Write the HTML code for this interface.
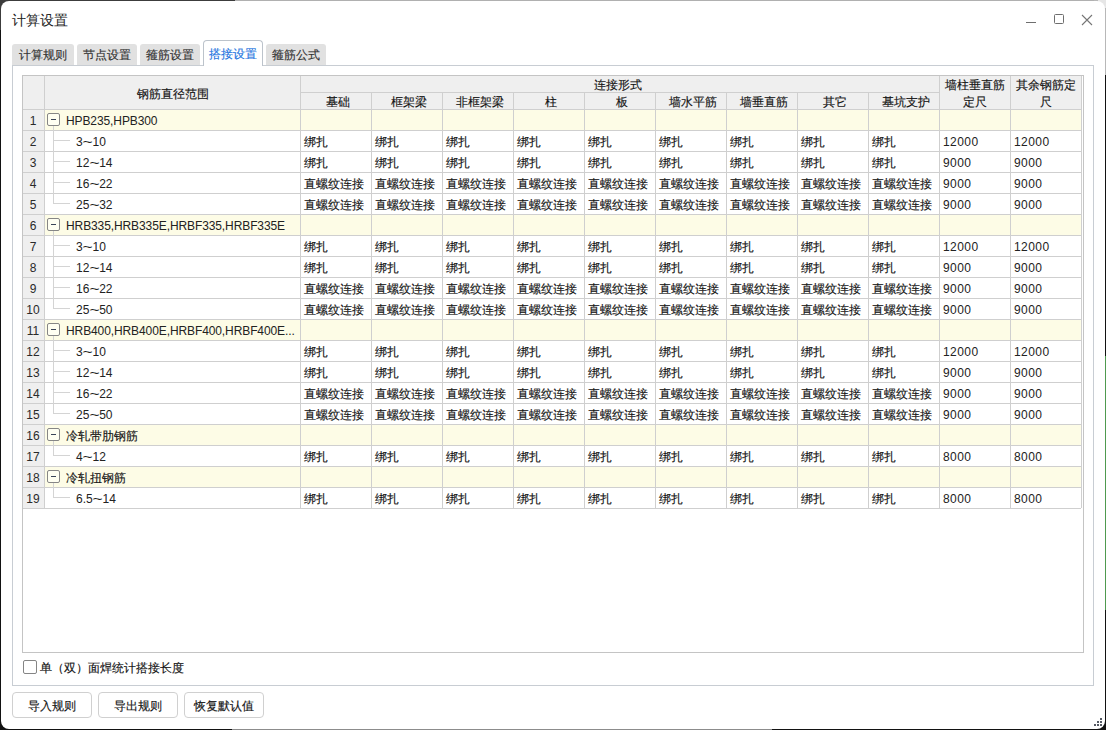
<!DOCTYPE html><html><head><meta charset="utf-8"><style>
*{box-sizing:border-box}
html,body{margin:0;padding:0}
body{width:1106px;height:730px;position:relative;overflow:hidden;background:#121212;font-family:"Liberation Sans",sans-serif;font-size:12px;color:#141414}
.a{position:absolute}
.win{left:1px;top:1px;width:1104px;height:728px;background:#fff;border-radius:8px;overflow:hidden}
.t{position:absolute;white-space:nowrap;line-height:14px;-webkit-text-stroke:0.15px currentColor}
.tab{position:absolute;top:44px;height:21px;background:#e1e1e1;border-radius:3px 3px 0 0}
.hl{position:absolute;height:1px;background:#cfcfcf}
.vl{position:absolute;width:1px;background:#cfcfcf}
</style></head><body><div class="a" style="left:0;top:0;width:1106px;height:1px;background:#b0b0b0"></div>
<div class="a" style="left:0;top:0;width:235px;height:1px;background:#3c3c3c"></div>
<div class="a" style="left:0;top:0;width:12px;height:30px;background:#3c3c3c"></div>
<div class="a" style="left:1094px;top:0;width:12px;height:75px;background:#b8b8b8"></div>
<div class="a" style="left:1098px;top:0;width:8px;height:8px;background:#e6e6e6"></div>
<div class="a" style="left:232px;top:729px;width:540px;height:1px;background:#8c8c8c"></div>
<div class="a" style="left:1105px;top:356px;width:1px;height:254px;background:#4f9a4f"></div>
<div class="a win">
<div class="t" style="left:11px;top:12px;font-size:14px;line-height:15px;-webkit-text-stroke:0;color:#222">计算设置</div>
<div class="a" style="left:1025px;top:21px;width:10px;height:1px;background:#6e6e6e"></div>
<div class="a" style="left:1053px;top:13px;width:10px;height:10px;border:1px solid #6e6e6e;border-radius:1.5px"></div>
<svg class="a" style="left:1080px;top:13px" width="12" height="12" viewBox="0 0 12 12"><path d="M1 1L11 11M11 1L1 11" stroke="#767676" stroke-width="1.1"/></svg>
<div class="a" style="left:11px;top:43px;width:62px;height:21px;background:#e1e1e1;border-radius:3px 3px 0 0"></div>
<div class="t" style="left:11px;top:47px;width:62px;text-align:center;color:#333">计算规则</div>
<div class="a" style="left:76px;top:43px;width:60px;height:21px;background:#e1e1e1;border-radius:3px 3px 0 0"></div>
<div class="t" style="left:76px;top:47px;width:60px;text-align:center;color:#333">节点设置</div>
<div class="a" style="left:139px;top:43px;width:60px;height:21px;background:#e1e1e1;border-radius:3px 3px 0 0"></div>
<div class="t" style="left:139px;top:47px;width:60px;text-align:center;color:#333">箍筋设置</div>
<div class="a" style="left:265px;top:43px;width:60px;height:21px;background:#e1e1e1;border-radius:3px 3px 0 0"></div>
<div class="t" style="left:265px;top:47px;width:60px;text-align:center;color:#333">箍筋公式</div>
<div class="a" style="left:11px;top:64px;width:1082px;height:621px;border:1px solid #c8cdd3"></div>
<div class="a" style="left:202px;top:39px;width:60px;height:26px;border:1px solid #bcc3cb;border-bottom:none;background:#fff;border-radius:4px 4px 0 0"></div>
<div class="t" style="left:202px;top:46px;width:60px;text-align:center;color:#1f75e0">搭接设置</div>
<div class="a" style="left:21px;top:74px;width:1062px;height:578px;border:1px solid #c4c4c4;background:#fff"></div>
<div class="a" style="left:22px;top:75px;width:1058px;height:33px;background:#efefef"></div>
<div class="a" style="left:22px;top:108px;width:21px;height:400px;background:#efefef"></div>
<div class="a" style="left:44px;top:109px;width:1036px;height:20px;background:#fdfce6"></div>
<div class="a" style="left:44px;top:214px;width:1036px;height:20px;background:#fdfce6"></div>
<div class="a" style="left:44px;top:319px;width:1036px;height:20px;background:#fdfce6"></div>
<div class="a" style="left:44px;top:424px;width:1036px;height:20px;background:#fdfce6"></div>
<div class="a" style="left:44px;top:466px;width:1036px;height:20px;background:#fdfce6"></div>
<div class="a" style="left:299px;top:91px;width:639px;height:1px;background:#cfcfcf"></div>
<div class="a" style="left:22px;top:108px;width:1058px;height:1px;background:#cfcfcf"></div>
<div class="a" style="left:22px;top:129px;width:1058px;height:1px;background:#cfcfcf"></div>
<div class="a" style="left:22px;top:150px;width:1058px;height:1px;background:#cfcfcf"></div>
<div class="a" style="left:22px;top:171px;width:1058px;height:1px;background:#cfcfcf"></div>
<div class="a" style="left:22px;top:192px;width:1058px;height:1px;background:#cfcfcf"></div>
<div class="a" style="left:22px;top:213px;width:1058px;height:1px;background:#cfcfcf"></div>
<div class="a" style="left:22px;top:234px;width:1058px;height:1px;background:#cfcfcf"></div>
<div class="a" style="left:22px;top:255px;width:1058px;height:1px;background:#cfcfcf"></div>
<div class="a" style="left:22px;top:276px;width:1058px;height:1px;background:#cfcfcf"></div>
<div class="a" style="left:22px;top:297px;width:1058px;height:1px;background:#cfcfcf"></div>
<div class="a" style="left:22px;top:318px;width:1058px;height:1px;background:#cfcfcf"></div>
<div class="a" style="left:22px;top:339px;width:1058px;height:1px;background:#cfcfcf"></div>
<div class="a" style="left:22px;top:360px;width:1058px;height:1px;background:#cfcfcf"></div>
<div class="a" style="left:22px;top:381px;width:1058px;height:1px;background:#cfcfcf"></div>
<div class="a" style="left:22px;top:402px;width:1058px;height:1px;background:#cfcfcf"></div>
<div class="a" style="left:22px;top:423px;width:1058px;height:1px;background:#cfcfcf"></div>
<div class="a" style="left:22px;top:444px;width:1058px;height:1px;background:#cfcfcf"></div>
<div class="a" style="left:22px;top:465px;width:1058px;height:1px;background:#cfcfcf"></div>
<div class="a" style="left:22px;top:486px;width:1058px;height:1px;background:#cfcfcf"></div>
<div class="a" style="left:22px;top:507px;width:1058px;height:1px;background:#cfcfcf"></div>
<div class="a" style="left:43px;top:75px;width:1px;height:432px;background:#cfcfcf"></div>
<div class="a" style="left:299px;top:75px;width:1px;height:432px;background:#cfcfcf"></div>
<div class="a" style="left:370px;top:91px;width:1px;height:416px;background:#cfcfcf"></div>
<div class="a" style="left:441px;top:91px;width:1px;height:416px;background:#cfcfcf"></div>
<div class="a" style="left:512px;top:91px;width:1px;height:416px;background:#cfcfcf"></div>
<div class="a" style="left:583px;top:91px;width:1px;height:416px;background:#cfcfcf"></div>
<div class="a" style="left:654px;top:91px;width:1px;height:416px;background:#cfcfcf"></div>
<div class="a" style="left:725px;top:91px;width:1px;height:416px;background:#cfcfcf"></div>
<div class="a" style="left:796px;top:91px;width:1px;height:416px;background:#cfcfcf"></div>
<div class="a" style="left:867px;top:91px;width:1px;height:416px;background:#cfcfcf"></div>
<div class="a" style="left:938px;top:75px;width:1px;height:432px;background:#cfcfcf"></div>
<div class="a" style="left:1009px;top:75px;width:1px;height:432px;background:#cfcfcf"></div>
<div class="a" style="left:1080px;top:75px;width:1px;height:432px;background:#cfcfcf"></div>
<div class="t" style="left:44px;top:86px;width:256px;text-align:center">钢筋直径范围</div>
<div class="t" style="left:297px;top:77px;width:639px;text-align:center">连接形式</div>
<div class="t" style="left:301px;top:94px;width:71px;text-align:center">基础</div>
<div class="t" style="left:372px;top:94px;width:71px;text-align:center">框架梁</div>
<div class="t" style="left:443px;top:94px;width:71px;text-align:center">非框架梁</div>
<div class="t" style="left:514px;top:94px;width:71px;text-align:center">柱</div>
<div class="t" style="left:585px;top:94px;width:71px;text-align:center">板</div>
<div class="t" style="left:656px;top:94px;width:71px;text-align:center">墙水平筋</div>
<div class="t" style="left:727px;top:94px;width:71px;text-align:center">墙垂直筋</div>
<div class="t" style="left:798px;top:94px;width:71px;text-align:center">其它</div>
<div class="t" style="left:869px;top:94px;width:71px;text-align:center">基坑支护</div>
<div class="t" style="left:938px;top:76px;width:71px;text-align:center;line-height:17px">墙柱垂直筋<br>定尺</div>
<div class="t" style="left:1009px;top:76px;width:71px;text-align:center;line-height:17px">其余钢筋定<br>尺</div>
<div class="t" style="left:21px;top:113px;width:22px;text-align:center;-webkit-text-stroke:0;color:#2a2a2a">1</div>
<div class="a" style="left:46px;top:112px;width:13px;height:13px;border:1px solid #868686;border-radius:2px;background:#fffff2"></div>
<div class="a" style="left:50px;top:118px;width:5px;height:1px;background:#3a4458"></div>
<div class="t" style="left:65px;top:113px;letter-spacing:-0.1px;-webkit-text-stroke:0;color:#222">HPB235,HPB300</div>
<div class="t" style="left:21px;top:134px;width:22px;text-align:center;-webkit-text-stroke:0;color:#2a2a2a">2</div>
<div class="t" style="left:75px;top:134px;"><span style="-webkit-text-stroke:0;color:#222">3<span style="display:inline-block;transform:scaleX(1.45);margin:0 1.4px">~</span>10</span></div>
<div class="t" style="left:303px;top:134px;">绑扎</div>
<div class="t" style="left:374px;top:134px;">绑扎</div>
<div class="t" style="left:445px;top:134px;">绑扎</div>
<div class="t" style="left:516px;top:134px;">绑扎</div>
<div class="t" style="left:587px;top:134px;">绑扎</div>
<div class="t" style="left:658px;top:134px;">绑扎</div>
<div class="t" style="left:729px;top:134px;">绑扎</div>
<div class="t" style="left:800px;top:134px;">绑扎</div>
<div class="t" style="left:871px;top:134px;">绑扎</div>
<div class="t" style="left:942px;top:134px;letter-spacing:0.45px;-webkit-text-stroke:0;color:#222">12000</div>
<div class="t" style="left:1013px;top:134px;letter-spacing:0.45px;-webkit-text-stroke:0;color:#222">12000</div>
<div class="t" style="left:21px;top:155px;width:22px;text-align:center;-webkit-text-stroke:0;color:#2a2a2a">3</div>
<div class="t" style="left:75px;top:155px;"><span style="-webkit-text-stroke:0;color:#222">12<span style="display:inline-block;transform:scaleX(1.45);margin:0 1.4px">~</span>14</span></div>
<div class="t" style="left:303px;top:155px;">绑扎</div>
<div class="t" style="left:374px;top:155px;">绑扎</div>
<div class="t" style="left:445px;top:155px;">绑扎</div>
<div class="t" style="left:516px;top:155px;">绑扎</div>
<div class="t" style="left:587px;top:155px;">绑扎</div>
<div class="t" style="left:658px;top:155px;">绑扎</div>
<div class="t" style="left:729px;top:155px;">绑扎</div>
<div class="t" style="left:800px;top:155px;">绑扎</div>
<div class="t" style="left:871px;top:155px;">绑扎</div>
<div class="t" style="left:942px;top:155px;letter-spacing:0.45px;-webkit-text-stroke:0;color:#222">9000</div>
<div class="t" style="left:1013px;top:155px;letter-spacing:0.45px;-webkit-text-stroke:0;color:#222">9000</div>
<div class="t" style="left:21px;top:176px;width:22px;text-align:center;-webkit-text-stroke:0;color:#2a2a2a">4</div>
<div class="t" style="left:75px;top:176px;"><span style="-webkit-text-stroke:0;color:#222">16<span style="display:inline-block;transform:scaleX(1.45);margin:0 1.4px">~</span>22</span></div>
<div class="t" style="left:303px;top:176px;">直螺纹连接</div>
<div class="t" style="left:374px;top:176px;">直螺纹连接</div>
<div class="t" style="left:445px;top:176px;">直螺纹连接</div>
<div class="t" style="left:516px;top:176px;">直螺纹连接</div>
<div class="t" style="left:587px;top:176px;">直螺纹连接</div>
<div class="t" style="left:658px;top:176px;">直螺纹连接</div>
<div class="t" style="left:729px;top:176px;">直螺纹连接</div>
<div class="t" style="left:800px;top:176px;">直螺纹连接</div>
<div class="t" style="left:871px;top:176px;">直螺纹连接</div>
<div class="t" style="left:942px;top:176px;letter-spacing:0.45px;-webkit-text-stroke:0;color:#222">9000</div>
<div class="t" style="left:1013px;top:176px;letter-spacing:0.45px;-webkit-text-stroke:0;color:#222">9000</div>
<div class="t" style="left:21px;top:197px;width:22px;text-align:center;-webkit-text-stroke:0;color:#2a2a2a">5</div>
<div class="t" style="left:75px;top:197px;"><span style="-webkit-text-stroke:0;color:#222">25<span style="display:inline-block;transform:scaleX(1.45);margin:0 1.4px">~</span>32</span></div>
<div class="t" style="left:303px;top:197px;">直螺纹连接</div>
<div class="t" style="left:374px;top:197px;">直螺纹连接</div>
<div class="t" style="left:445px;top:197px;">直螺纹连接</div>
<div class="t" style="left:516px;top:197px;">直螺纹连接</div>
<div class="t" style="left:587px;top:197px;">直螺纹连接</div>
<div class="t" style="left:658px;top:197px;">直螺纹连接</div>
<div class="t" style="left:729px;top:197px;">直螺纹连接</div>
<div class="t" style="left:800px;top:197px;">直螺纹连接</div>
<div class="t" style="left:871px;top:197px;">直螺纹连接</div>
<div class="t" style="left:942px;top:197px;letter-spacing:0.45px;-webkit-text-stroke:0;color:#222">9000</div>
<div class="t" style="left:1013px;top:197px;letter-spacing:0.45px;-webkit-text-stroke:0;color:#222">9000</div>
<div class="t" style="left:21px;top:218px;width:22px;text-align:center;-webkit-text-stroke:0;color:#2a2a2a">6</div>
<div class="a" style="left:46px;top:217px;width:13px;height:13px;border:1px solid #868686;border-radius:2px;background:#fffff2"></div>
<div class="a" style="left:50px;top:223px;width:5px;height:1px;background:#3a4458"></div>
<div class="t" style="left:65px;top:218px;letter-spacing:-0.1px;-webkit-text-stroke:0;color:#222">HRB335,HRB335E,HRBF335,HRBF335E</div>
<div class="t" style="left:21px;top:239px;width:22px;text-align:center;-webkit-text-stroke:0;color:#2a2a2a">7</div>
<div class="t" style="left:75px;top:239px;"><span style="-webkit-text-stroke:0;color:#222">3<span style="display:inline-block;transform:scaleX(1.45);margin:0 1.4px">~</span>10</span></div>
<div class="t" style="left:303px;top:239px;">绑扎</div>
<div class="t" style="left:374px;top:239px;">绑扎</div>
<div class="t" style="left:445px;top:239px;">绑扎</div>
<div class="t" style="left:516px;top:239px;">绑扎</div>
<div class="t" style="left:587px;top:239px;">绑扎</div>
<div class="t" style="left:658px;top:239px;">绑扎</div>
<div class="t" style="left:729px;top:239px;">绑扎</div>
<div class="t" style="left:800px;top:239px;">绑扎</div>
<div class="t" style="left:871px;top:239px;">绑扎</div>
<div class="t" style="left:942px;top:239px;letter-spacing:0.45px;-webkit-text-stroke:0;color:#222">12000</div>
<div class="t" style="left:1013px;top:239px;letter-spacing:0.45px;-webkit-text-stroke:0;color:#222">12000</div>
<div class="t" style="left:21px;top:260px;width:22px;text-align:center;-webkit-text-stroke:0;color:#2a2a2a">8</div>
<div class="t" style="left:75px;top:260px;"><span style="-webkit-text-stroke:0;color:#222">12<span style="display:inline-block;transform:scaleX(1.45);margin:0 1.4px">~</span>14</span></div>
<div class="t" style="left:303px;top:260px;">绑扎</div>
<div class="t" style="left:374px;top:260px;">绑扎</div>
<div class="t" style="left:445px;top:260px;">绑扎</div>
<div class="t" style="left:516px;top:260px;">绑扎</div>
<div class="t" style="left:587px;top:260px;">绑扎</div>
<div class="t" style="left:658px;top:260px;">绑扎</div>
<div class="t" style="left:729px;top:260px;">绑扎</div>
<div class="t" style="left:800px;top:260px;">绑扎</div>
<div class="t" style="left:871px;top:260px;">绑扎</div>
<div class="t" style="left:942px;top:260px;letter-spacing:0.45px;-webkit-text-stroke:0;color:#222">9000</div>
<div class="t" style="left:1013px;top:260px;letter-spacing:0.45px;-webkit-text-stroke:0;color:#222">9000</div>
<div class="t" style="left:21px;top:281px;width:22px;text-align:center;-webkit-text-stroke:0;color:#2a2a2a">9</div>
<div class="t" style="left:75px;top:281px;"><span style="-webkit-text-stroke:0;color:#222">16<span style="display:inline-block;transform:scaleX(1.45);margin:0 1.4px">~</span>22</span></div>
<div class="t" style="left:303px;top:281px;">直螺纹连接</div>
<div class="t" style="left:374px;top:281px;">直螺纹连接</div>
<div class="t" style="left:445px;top:281px;">直螺纹连接</div>
<div class="t" style="left:516px;top:281px;">直螺纹连接</div>
<div class="t" style="left:587px;top:281px;">直螺纹连接</div>
<div class="t" style="left:658px;top:281px;">直螺纹连接</div>
<div class="t" style="left:729px;top:281px;">直螺纹连接</div>
<div class="t" style="left:800px;top:281px;">直螺纹连接</div>
<div class="t" style="left:871px;top:281px;">直螺纹连接</div>
<div class="t" style="left:942px;top:281px;letter-spacing:0.45px;-webkit-text-stroke:0;color:#222">9000</div>
<div class="t" style="left:1013px;top:281px;letter-spacing:0.45px;-webkit-text-stroke:0;color:#222">9000</div>
<div class="t" style="left:21px;top:302px;width:22px;text-align:center;-webkit-text-stroke:0;color:#2a2a2a">10</div>
<div class="t" style="left:75px;top:302px;"><span style="-webkit-text-stroke:0;color:#222">25<span style="display:inline-block;transform:scaleX(1.45);margin:0 1.4px">~</span>50</span></div>
<div class="t" style="left:303px;top:302px;">直螺纹连接</div>
<div class="t" style="left:374px;top:302px;">直螺纹连接</div>
<div class="t" style="left:445px;top:302px;">直螺纹连接</div>
<div class="t" style="left:516px;top:302px;">直螺纹连接</div>
<div class="t" style="left:587px;top:302px;">直螺纹连接</div>
<div class="t" style="left:658px;top:302px;">直螺纹连接</div>
<div class="t" style="left:729px;top:302px;">直螺纹连接</div>
<div class="t" style="left:800px;top:302px;">直螺纹连接</div>
<div class="t" style="left:871px;top:302px;">直螺纹连接</div>
<div class="t" style="left:942px;top:302px;letter-spacing:0.45px;-webkit-text-stroke:0;color:#222">9000</div>
<div class="t" style="left:1013px;top:302px;letter-spacing:0.45px;-webkit-text-stroke:0;color:#222">9000</div>
<div class="t" style="left:21px;top:323px;width:22px;text-align:center;-webkit-text-stroke:0;color:#2a2a2a">11</div>
<div class="a" style="left:46px;top:322px;width:13px;height:13px;border:1px solid #868686;border-radius:2px;background:#fffff2"></div>
<div class="a" style="left:50px;top:328px;width:5px;height:1px;background:#3a4458"></div>
<div class="t" style="left:65px;top:323px;letter-spacing:-0.1px;-webkit-text-stroke:0;color:#222">HRB400,HRB400E,HRBF400,HRBF400E...</div>
<div class="t" style="left:21px;top:344px;width:22px;text-align:center;-webkit-text-stroke:0;color:#2a2a2a">12</div>
<div class="t" style="left:75px;top:344px;"><span style="-webkit-text-stroke:0;color:#222">3<span style="display:inline-block;transform:scaleX(1.45);margin:0 1.4px">~</span>10</span></div>
<div class="t" style="left:303px;top:344px;">绑扎</div>
<div class="t" style="left:374px;top:344px;">绑扎</div>
<div class="t" style="left:445px;top:344px;">绑扎</div>
<div class="t" style="left:516px;top:344px;">绑扎</div>
<div class="t" style="left:587px;top:344px;">绑扎</div>
<div class="t" style="left:658px;top:344px;">绑扎</div>
<div class="t" style="left:729px;top:344px;">绑扎</div>
<div class="t" style="left:800px;top:344px;">绑扎</div>
<div class="t" style="left:871px;top:344px;">绑扎</div>
<div class="t" style="left:942px;top:344px;letter-spacing:0.45px;-webkit-text-stroke:0;color:#222">12000</div>
<div class="t" style="left:1013px;top:344px;letter-spacing:0.45px;-webkit-text-stroke:0;color:#222">12000</div>
<div class="t" style="left:21px;top:365px;width:22px;text-align:center;-webkit-text-stroke:0;color:#2a2a2a">13</div>
<div class="t" style="left:75px;top:365px;"><span style="-webkit-text-stroke:0;color:#222">12<span style="display:inline-block;transform:scaleX(1.45);margin:0 1.4px">~</span>14</span></div>
<div class="t" style="left:303px;top:365px;">绑扎</div>
<div class="t" style="left:374px;top:365px;">绑扎</div>
<div class="t" style="left:445px;top:365px;">绑扎</div>
<div class="t" style="left:516px;top:365px;">绑扎</div>
<div class="t" style="left:587px;top:365px;">绑扎</div>
<div class="t" style="left:658px;top:365px;">绑扎</div>
<div class="t" style="left:729px;top:365px;">绑扎</div>
<div class="t" style="left:800px;top:365px;">绑扎</div>
<div class="t" style="left:871px;top:365px;">绑扎</div>
<div class="t" style="left:942px;top:365px;letter-spacing:0.45px;-webkit-text-stroke:0;color:#222">9000</div>
<div class="t" style="left:1013px;top:365px;letter-spacing:0.45px;-webkit-text-stroke:0;color:#222">9000</div>
<div class="t" style="left:21px;top:386px;width:22px;text-align:center;-webkit-text-stroke:0;color:#2a2a2a">14</div>
<div class="t" style="left:75px;top:386px;"><span style="-webkit-text-stroke:0;color:#222">16<span style="display:inline-block;transform:scaleX(1.45);margin:0 1.4px">~</span>22</span></div>
<div class="t" style="left:303px;top:386px;">直螺纹连接</div>
<div class="t" style="left:374px;top:386px;">直螺纹连接</div>
<div class="t" style="left:445px;top:386px;">直螺纹连接</div>
<div class="t" style="left:516px;top:386px;">直螺纹连接</div>
<div class="t" style="left:587px;top:386px;">直螺纹连接</div>
<div class="t" style="left:658px;top:386px;">直螺纹连接</div>
<div class="t" style="left:729px;top:386px;">直螺纹连接</div>
<div class="t" style="left:800px;top:386px;">直螺纹连接</div>
<div class="t" style="left:871px;top:386px;">直螺纹连接</div>
<div class="t" style="left:942px;top:386px;letter-spacing:0.45px;-webkit-text-stroke:0;color:#222">9000</div>
<div class="t" style="left:1013px;top:386px;letter-spacing:0.45px;-webkit-text-stroke:0;color:#222">9000</div>
<div class="t" style="left:21px;top:407px;width:22px;text-align:center;-webkit-text-stroke:0;color:#2a2a2a">15</div>
<div class="t" style="left:75px;top:407px;"><span style="-webkit-text-stroke:0;color:#222">25<span style="display:inline-block;transform:scaleX(1.45);margin:0 1.4px">~</span>50</span></div>
<div class="t" style="left:303px;top:407px;">直螺纹连接</div>
<div class="t" style="left:374px;top:407px;">直螺纹连接</div>
<div class="t" style="left:445px;top:407px;">直螺纹连接</div>
<div class="t" style="left:516px;top:407px;">直螺纹连接</div>
<div class="t" style="left:587px;top:407px;">直螺纹连接</div>
<div class="t" style="left:658px;top:407px;">直螺纹连接</div>
<div class="t" style="left:729px;top:407px;">直螺纹连接</div>
<div class="t" style="left:800px;top:407px;">直螺纹连接</div>
<div class="t" style="left:871px;top:407px;">直螺纹连接</div>
<div class="t" style="left:942px;top:407px;letter-spacing:0.45px;-webkit-text-stroke:0;color:#222">9000</div>
<div class="t" style="left:1013px;top:407px;letter-spacing:0.45px;-webkit-text-stroke:0;color:#222">9000</div>
<div class="t" style="left:21px;top:428px;width:22px;text-align:center;-webkit-text-stroke:0;color:#2a2a2a">16</div>
<div class="a" style="left:46px;top:427px;width:13px;height:13px;border:1px solid #868686;border-radius:2px;background:#fffff2"></div>
<div class="a" style="left:50px;top:433px;width:5px;height:1px;background:#3a4458"></div>
<div class="t" style="left:65px;top:428px;letter-spacing:-0.1px">冷轧带肋钢筋</div>
<div class="t" style="left:21px;top:449px;width:22px;text-align:center;-webkit-text-stroke:0;color:#2a2a2a">17</div>
<div class="t" style="left:75px;top:449px;"><span style="-webkit-text-stroke:0;color:#222">4<span style="display:inline-block;transform:scaleX(1.45);margin:0 1.4px">~</span>12</span></div>
<div class="t" style="left:303px;top:449px;">绑扎</div>
<div class="t" style="left:374px;top:449px;">绑扎</div>
<div class="t" style="left:445px;top:449px;">绑扎</div>
<div class="t" style="left:516px;top:449px;">绑扎</div>
<div class="t" style="left:587px;top:449px;">绑扎</div>
<div class="t" style="left:658px;top:449px;">绑扎</div>
<div class="t" style="left:729px;top:449px;">绑扎</div>
<div class="t" style="left:800px;top:449px;">绑扎</div>
<div class="t" style="left:871px;top:449px;">绑扎</div>
<div class="t" style="left:942px;top:449px;letter-spacing:0.45px;-webkit-text-stroke:0;color:#222">8000</div>
<div class="t" style="left:1013px;top:449px;letter-spacing:0.45px;-webkit-text-stroke:0;color:#222">8000</div>
<div class="t" style="left:21px;top:470px;width:22px;text-align:center;-webkit-text-stroke:0;color:#2a2a2a">18</div>
<div class="a" style="left:46px;top:469px;width:13px;height:13px;border:1px solid #868686;border-radius:2px;background:#fffff2"></div>
<div class="a" style="left:50px;top:475px;width:5px;height:1px;background:#3a4458"></div>
<div class="t" style="left:65px;top:470px;letter-spacing:-0.1px">冷轧扭钢筋</div>
<div class="t" style="left:21px;top:491px;width:22px;text-align:center;-webkit-text-stroke:0;color:#2a2a2a">19</div>
<div class="t" style="left:75px;top:491px;"><span style="-webkit-text-stroke:0;color:#222">6.5<span style="display:inline-block;transform:scaleX(1.45);margin:0 1.4px">~</span>14</span></div>
<div class="t" style="left:303px;top:491px;">绑扎</div>
<div class="t" style="left:374px;top:491px;">绑扎</div>
<div class="t" style="left:445px;top:491px;">绑扎</div>
<div class="t" style="left:516px;top:491px;">绑扎</div>
<div class="t" style="left:587px;top:491px;">绑扎</div>
<div class="t" style="left:658px;top:491px;">绑扎</div>
<div class="t" style="left:729px;top:491px;">绑扎</div>
<div class="t" style="left:800px;top:491px;">绑扎</div>
<div class="t" style="left:871px;top:491px;">绑扎</div>
<div class="t" style="left:942px;top:491px;letter-spacing:0.45px;-webkit-text-stroke:0;color:#222">8000</div>
<div class="t" style="left:1013px;top:491px;letter-spacing:0.45px;-webkit-text-stroke:0;color:#222">8000</div>
<div class="a" style="left:52px;top:125px;width:1px;height:78px;background:#d4d4d4"></div>
<div class="a" style="left:52px;top:139px;width:17px;height:1px;background:#d4d4d4"></div>
<div class="a" style="left:52px;top:160px;width:17px;height:1px;background:#d4d4d4"></div>
<div class="a" style="left:52px;top:181px;width:17px;height:1px;background:#d4d4d4"></div>
<div class="a" style="left:52px;top:202px;width:17px;height:1px;background:#d4d4d4"></div>
<div class="a" style="left:52px;top:230px;width:1px;height:78px;background:#d4d4d4"></div>
<div class="a" style="left:52px;top:244px;width:17px;height:1px;background:#d4d4d4"></div>
<div class="a" style="left:52px;top:265px;width:17px;height:1px;background:#d4d4d4"></div>
<div class="a" style="left:52px;top:286px;width:17px;height:1px;background:#d4d4d4"></div>
<div class="a" style="left:52px;top:307px;width:17px;height:1px;background:#d4d4d4"></div>
<div class="a" style="left:52px;top:335px;width:1px;height:78px;background:#d4d4d4"></div>
<div class="a" style="left:52px;top:349px;width:17px;height:1px;background:#d4d4d4"></div>
<div class="a" style="left:52px;top:370px;width:17px;height:1px;background:#d4d4d4"></div>
<div class="a" style="left:52px;top:391px;width:17px;height:1px;background:#d4d4d4"></div>
<div class="a" style="left:52px;top:412px;width:17px;height:1px;background:#d4d4d4"></div>
<div class="a" style="left:52px;top:440px;width:1px;height:15px;background:#d4d4d4"></div>
<div class="a" style="left:52px;top:454px;width:17px;height:1px;background:#d4d4d4"></div>
<div class="a" style="left:52px;top:482px;width:1px;height:15px;background:#d4d4d4"></div>
<div class="a" style="left:52px;top:496px;width:17px;height:1px;background:#d4d4d4"></div>
<div class="a" style="left:22px;top:659px;width:14px;height:14px;border:1px solid #858585;border-radius:2px;background:#fff"></div>
<div class="t" style="left:39px;top:660px;">单（双）面焊统计搭接长度</div>
<div class="a" style="left:11px;top:691px;width:80px;height:26px;border:1px solid #d0d0d0;border-radius:4px;background:#fff"></div>
<div class="t" style="left:11px;top:698px;width:80px;text-align:center">导入规则</div>
<div class="a" style="left:97px;top:691px;width:80px;height:26px;border:1px solid #d0d0d0;border-radius:4px;background:#fff"></div>
<div class="t" style="left:97px;top:698px;width:80px;text-align:center">导出规则</div>
<div class="a" style="left:183px;top:691px;width:80px;height:26px;border:1px solid #d0d0d0;border-radius:4px;background:#fff"></div>
<div class="t" style="left:183px;top:698px;width:80px;text-align:center">恢复默认值</div>
<div class="a" style="left:1099px;top:717px;width:2px;height:2px;background:#555a64"></div>
<div class="a" style="left:1096px;top:720px;width:2px;height:2px;background:#555a64"></div>
<div class="a" style="left:1099px;top:720px;width:2px;height:2px;background:#555a64"></div>
<div class="a" style="left:1093px;top:723px;width:2px;height:2px;background:#555a64"></div>
<div class="a" style="left:1096px;top:723px;width:2px;height:2px;background:#555a64"></div>
<div class="a" style="left:1099px;top:723px;width:2px;height:2px;background:#555a64"></div>
</div></body></html>
